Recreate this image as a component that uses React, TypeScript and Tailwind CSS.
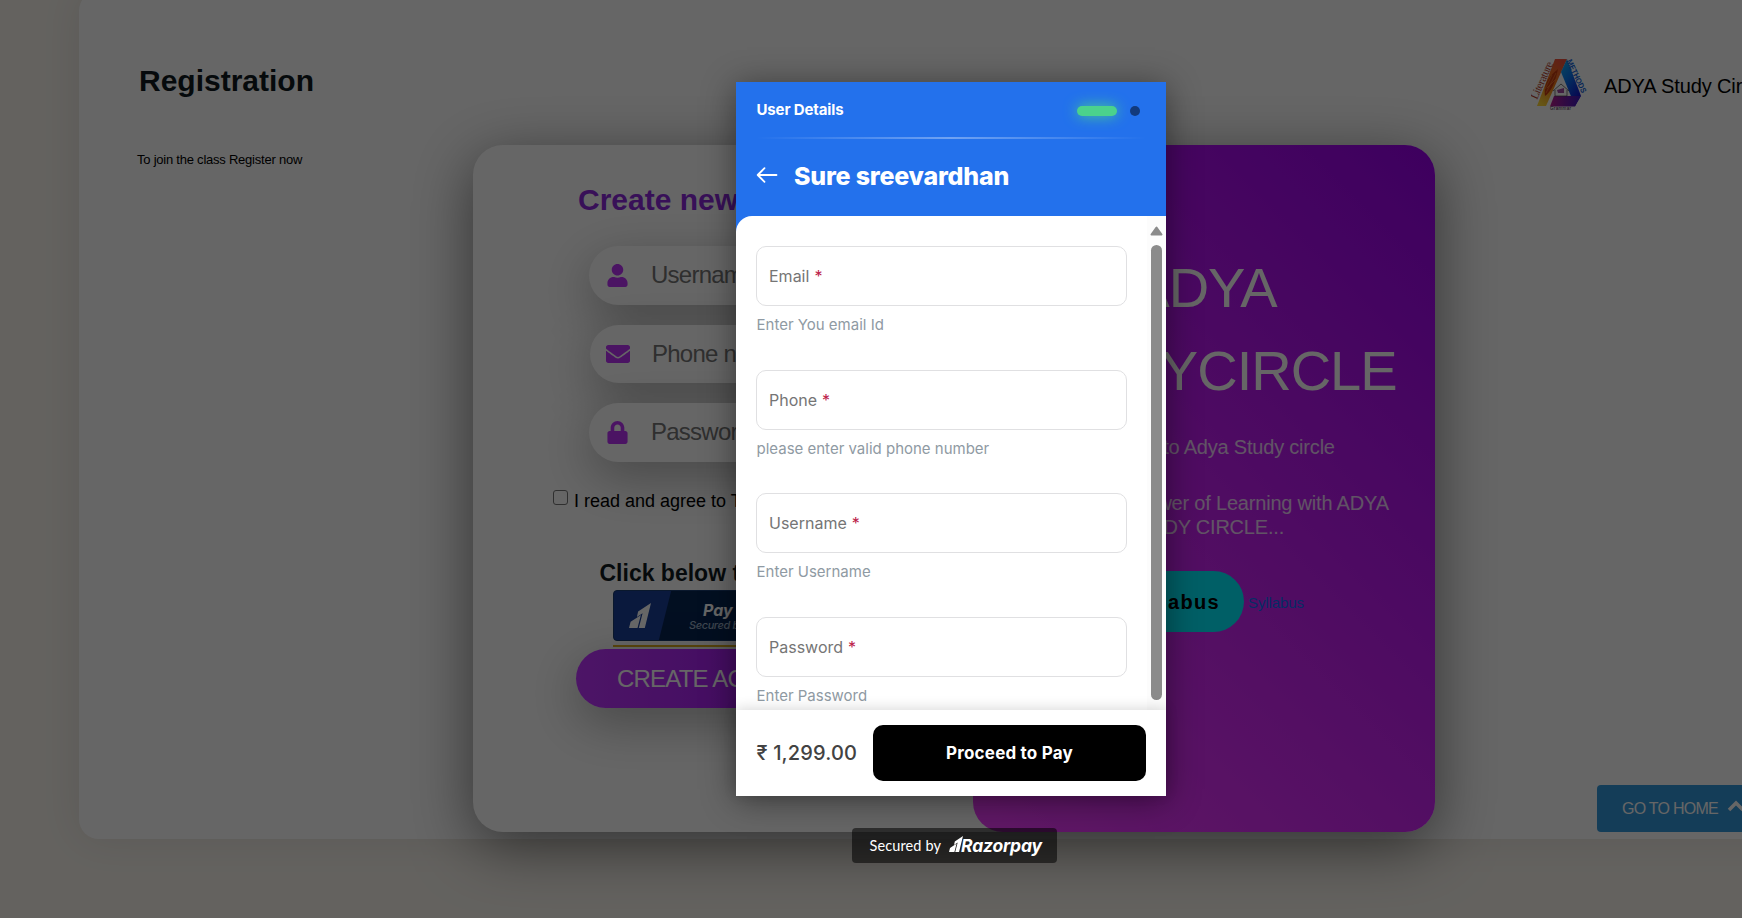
import type { ReactNode } from "react";
import { FaUser, FaEnvelope, FaLock } from "react-icons/fa";

function AdyaLogo() {
  return (
    <svg width="58" height="56" viewBox="0 0 58 56">
      <defs>
        <linearGradient id="l" x1="0.7" y1="0" x2="0.2" y2="1">
          <stop offset="0" stopColor="#f0523c" />
          <stop offset="0.5" stopColor="#f07a14" />
          <stop offset="1" stopColor="#ffd83a" />
        </linearGradient>
        <linearGradient id="r" x1="0" y1="0" x2="0.6" y2="1">
          <stop offset="0" stopColor="#18b4f0" />
          <stop offset="0.45" stopColor="#0a78f0" />
          <stop offset="1" stopColor="#1410c8" />
        </linearGradient>
        <linearGradient id="b" x1="0" y1="0" x2="1" y2="0">
          <stop offset="0" stopColor="#b81e8c" />
          <stop offset="1" stopColor="#3a18c0" />
        </linearGradient>
      </defs>
      <path d="M24 2H36L15 49H6Z" fill="url(#l)" />
      <path d="M36 2L50 39L44 49L30 15Z" fill="url(#r)" />
      <path d="M23 39H49.500L44 49.500H19Z" fill="url(#b)" />
      <path d="M27 12C20 18 12 25 14 39C20 35 24 26 27 12Z" fill="#c63a10" />
      <path d="M25 16L15 36M21 18L14 32M25 22L16 31" stroke="#f08030" strokeWidth="0.7" />
      <path d="M22 34L30 27L38 34M24 33V39H36V33" fill="none" stroke="#444" strokeWidth="0.7" />
      <path d="M26 33L33 31V36H27Z" fill="#a04ca0" />
      <text x="6" y="43" transform="rotate(-66 6 43)" fontSize="11.500" fontFamily="Liberation Serif, serif" fill="#b03c28" textLength="40">Literature</text>
      <text x="35.500" y="4" transform="rotate(65 35.500 4)" fontSize="8" fontWeight="bold" fontFamily="Liberation Sans, sans-serif" fill="#1464d8" textLength="36" lengthAdjust="spacingAndGlyphs">METHODS</text>
      <text x="19" y="52.500" fontSize="4.500" fontFamily="Liberation Sans, sans-serif" fill="#30203c" textLength="21">Grammar</text>
    </svg>
  );
}

function RazorMark({ className }: { className: string }) {
  return (
    <svg viewBox="0 0 22 25" className={className} fill="currentColor">
      <path d="M22 0L15.800 25H9.800L13.600 10.200L7.900 14L9.100 8.600Z" />
      <path d="M8.600 14.200L11.900 12L8.500 25H0L1.600 18.800Z" />
    </svg>
  );
}

function Pill({ icon, text, className }: { icon: ReactNode; text: string; className: string }) {
  return (
    <div className={`flex w-[268px] items-center rounded-full bg-white shadow-[0_15px_50px_rgba(0,0,0,0.3)] ${className}`}>
      <div className="flex w-[56px] justify-center pb-px text-[#bb34f8]">{icon}</div>
      <span className="pb-px pl-[6px] text-2xl tracking-[-0.75px] text-[#757575]">{text}</span>
    </div>
  );
}

function Field({ label, hint }: { label: string; hint: string }) {
  return (
    <div className="h-[123.670px]">
      <div className="flex h-[60px] w-[371px] items-center rounded-[10px] border border-[#e0e0e2] bg-white pl-3 text-[16px] text-[#757575]">
        {label}<span className="ml-[5px] text-[#bb2048]">*</span>
      </div>
      <div className="mt-[9px] pl-[0.500px] text-[15px] leading-5 text-[#8f9aa3]">{hint}</div>
    </div>
  );
}

function Page() {
  return (
    <div className="h-full overflow-hidden bg-[#f9f5ee] pl-[79px] text-black">
      <main className="-mt-[9px] h-[848px] w-[1720px] rounded-[20px] bg-white pt-[9px] shadow-[0_0_40px_rgba(0,0,0,0.09)]">
        <header className="flex h-[145px] justify-between">
          <div className="pl-[58px]">
            <h1 className="pt-[63px] pl-[2px] text-[30px] leading-9 font-bold text-[#111b1e]">Registration</h1>
            <p className="mt-[51px] text-[13px] leading-5 tracking-[-0.230px]">To join the class Register now</p>
          </div>
          <div className="flex w-[268px] pt-[57px]">
            <AdyaLogo />
            <span className="mt-[17px] ml-[15px] text-[20px] leading-6 tracking-[-0.100px] whitespace-nowrap">ADYA Study Circle</span>
          </div>
        </header>
        <section className="ml-[394px] flex h-[687px] w-[962px] rounded-[30px] bg-white shadow-[0_14px_60px_rgba(0,0,0,0.5)]">
          <div className="flex w-[500px] flex-col pt-[37px]">
            <h2 className="pl-[105px] text-[30px] leading-9 font-bold text-[#8c28dc]">Create new Account</h2>
            <Pill className="mt-[28px] ml-[116px] h-[59px]" icon={<FaUser size={23} />} text="Username" />
            <Pill className="mt-[20px] ml-[117px] h-[58px]" icon={<FaEnvelope size={24} />} text="Phone number" />
            <Pill className="mt-[20px] ml-[116px] h-[59px]" icon={<FaLock size={23} />} text="Password" />
            <label className="mt-[26px] ml-[80px] flex h-[30px] text-[18px] leading-[27px]">
              <span className="mt-[2px] mr-[6px] block size-[15px] rounded-[3px] border border-[#767676]" />
              I read and agree to T&amp;C
            </label>
            <h3 className="mt-[39px] pl-[126.500px] text-[23px] leading-8 font-bold text-[#111b1e]">Click below to pay</h3>
            <div className="mt-px ml-[140px] w-[220px] border-b-2 border-[#dfae20] pb-[4px]">
              <div className="flex h-[51px] overflow-hidden rounded-[4px] border border-[#1a3c70] bg-[#072654]">
                <div className="-ml-2 flex w-[59px] -skew-x-[14deg] items-center justify-center bg-[#1b3f98]">
                  <RazorMark className="ml-[8px] h-[25px] w-[22px] skew-x-[14deg] text-white" />
                </div>
                <div className="flex-1 pl-[24px] font-['Inter','Noto_Sans',sans-serif] italic text-white">
                  <div className="pt-[10px] pl-[14px] text-[16px] leading-[18px] font-bold">Pay Now</div>
                  <div className="text-[11px] leading-[12px] font-medium tracking-[-0.400px] whitespace-nowrap text-[#9db0c8]">Secured by Razorpay</div>
                </div>
              </div>
            </div>
            <div className="mt-[2px] ml-[103px] flex h-[59px] w-[280px] items-center rounded-full bg-linear-to-r from-[#bf35ff] to-[#9c00ee] pl-[41px] text-2xl tracking-[-0.8px] text-white shadow-[0_15px_50px_rgba(0,0,0,0.3)]">
              CREATE ACCOUNT
            </div>
          </div>
          <div className="flex w-[462px] flex-col items-center rounded-[30px] bg-linear-[45deg] from-[#f33eff] to-[#9a00ec] pt-[101px] text-white">
            <h2 className="pl-px text-center text-[56px] leading-[83px] tracking-[-1px]">ADYA<br />STUDYCIRCLE</h2>
            <p className="mt-[23px] pl-[3px] text-[20px] leading-6 tracking-[-0.200px] opacity-80">Welcome to Adya Study circle</p>
            <p className="mt-[32px] text-center text-[20px] leading-6 tracking-[-0.200px] opacity-80">Discover the Power of Learning with ADYA<br />STUDY CIRCLE...</p>
            <div className="mt-[32px] flex items-center gap-[4px] pr-px">
              <span className="flex h-[61px] w-[141px] items-center justify-center rounded-full bg-[#00eeff] pt-px text-[20px] font-bold tracking-[1.300px] text-black">Syllabus</span>
              <span className="pt-[4px] text-[15px] tracking-[-0.100px] text-[#0d6efd]">Syllabus</span>
            </div>
          </div>
        </section>
      </main>
    </div>
  );
}

function Checkout() {
  return (
    <div className="flex flex-col items-center pl-[160px] font-['Inter',sans-serif]">
      <div className="flex h-[714px] w-[430px] flex-col bg-[#2371ec] shadow-[0_4px_32px_rgba(0,0,0,0.45)]">
        <header className="h-[134px] px-5 text-white">
          <div className="flex h-[55px] items-center justify-between pr-[6px]">
            <span className="pt-[2px] pl-[0.500px] text-[15px] font-bold tracking-[-0.130px]">User Details</span>
            <div className="mt-[3px] flex items-center gap-[13px]">
              <span className="h-[10px] w-[40px] rounded-full bg-[#4bd28c] shadow-[0_0_14px_#4bd28c]" />
              <span className="size-[10px] rounded-full bg-[#123a7c]" />
            </div>
          </div>
          <div className="h-[2px] bg-linear-to-r from-transparent via-white/35 to-transparent" />
          <div className="flex items-center gap-[16px] pt-[19px]">
            <svg width="22" height="16" viewBox="0 0 22 16" className="-mt-[2px]" fill="none" stroke="white" strokeWidth="1.800" strokeLinecap="round" strokeLinejoin="round">
              <path d="M20.500 8H2M8.500 1.200L1.700 8L8.500 14.800" />
            </svg>
            <h2 className="text-[25px] leading-9 font-extrabold tracking-[-0.200px]">Sure sreevardhan</h2>
          </div>
        </header>
        <div className="flex h-[494px] justify-between overflow-hidden rounded-tl-[16px] bg-white">
          <div className="pt-[30px] pl-5">
            <Field label="Email" hint="Enter You email Id" />
            <Field label="Phone" hint="please enter valid phone number" />
            <Field label="Username" hint="Enter Username" />
            <Field label="Password" hint="Enter Password" />
          </div>
          <div className="flex w-[19px] flex-col items-center bg-[#fcfcfc] pt-[10px]">
            <svg width="13" height="10" viewBox="0 0 13 10">
              <path d="M6.500 1.500L11.500 8.500H1.500Z" fill="#8b8b8b" stroke="#8b8b8b" strokeWidth="2" strokeLinejoin="round" />
            </svg>
            <div className="mt-[9px] h-[455px] w-[11px] rounded-full bg-[#8b8b8b]" />
          </div>
        </div>
        <footer className="flex h-[86px] items-center justify-between bg-white pr-5 pl-5 shadow-[0_-2px_12px_rgba(0,0,0,0.14)]">
          <span className="pl-[0.500px] text-[20px] font-medium tracking-[0.150px] text-[#424242]">₹ 1,299.00</span>
          <div className="flex h-[56px] w-[273px] items-center justify-center rounded-[10px] bg-black pt-px text-[17px] font-bold tracking-[0.200px] text-white">Proceed to Pay</div>
        </footer>
      </div>
      <div className="mt-[32px] ml-[6px] flex h-[35px] w-[205px] items-center rounded-[4px] bg-black/55 pl-[18px] text-white">
        <span className="font-['Lato',sans-serif] text-[14.500px] tracking-[0.120px]">Secured by</span>
        <RazorMark className="-mt-[3px] ml-[8px] h-[16px] w-[14px]" />
        <span className="-ml-[2px] text-[17.500px] leading-5 font-bold tracking-[-0.200px] italic">Razorpay</span>
      </div>
    </div>
  );
}

export default function App() {
  return (
    <div className="relative h-[918px] w-full overflow-hidden font-['Liberation_Sans',Arial,sans-serif]">
      <Page />
      <div className="absolute top-[785px] left-[1597px] flex h-[47px] w-[180px] items-center rounded-[4px] bg-[#3498db] pt-px pl-[25px] text-[16px] tracking-[-0.750px] text-white">
        GO TO HOME
        <svg width="18" height="14" viewBox="0 0 18 14" className="-mt-[6px] ml-[9px]" fill="none" stroke="white" strokeWidth="3.500">
          <path d="M2 11L9 4L16 11" />
        </svg>
      </div>
      <div className="absolute inset-0 bg-black/60 pt-[82px]">
        <Checkout />
      </div>
    </div>
  );
}
